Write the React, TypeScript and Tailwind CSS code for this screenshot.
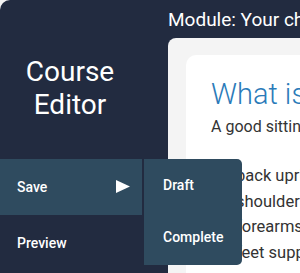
const navy = "bg-[#222b40]";

export default function App() {
  return (
    <div className="relative h-[273px] w-[300px] overflow-hidden bg-[#f4f4f4] font-['Roboto',sans-serif]">
      <div className={`flex h-full ${navy} rounded-tl-[10px]`}>
        <aside className="w-[140px] shrink-0 pt-[55px] text-center text-[28px] leading-[33px] text-white">
          Course
          <br />
          Editor
        </aside>
        <main className="flex min-w-0 flex-1 flex-col pl-[28px] pt-[10px]">
          <h1 className="whitespace-nowrap text-[19px] leading-[20px] text-white">Module: Your chapter</h1>
          <div className="mt-[8px] flex-1 rounded-tl-[8px] bg-[#f4f4f4] pl-[18px] pt-[17px]">
            <div className="h-full rounded-tl-[10px] bg-white pl-[25px] pt-[22px] text-[#333]">
              <h2 className="whitespace-nowrap text-[29px] font-light leading-[34px] text-[#2b7bb9]">What is a good posture?</h2>
              <p className="mt-[7px] whitespace-nowrap text-[16px] leading-[18px]">A good sitting posture means:</p>
              <ul className="mt-[27px] list-disc whitespace-nowrap pl-[25px] text-[16.5px] leading-[25.5px]">
                <li>back upright</li>
                <li>shoulders relaxed</li>
                <li>forearms level</li>
                <li>feet supported</li>
              </ul>
            </div>
          </div>
        </main>
      </div>

      <div className="absolute left-0 top-[159px] w-[142px] text-[14px] font-medium text-white">
        <div className="flex h-[56px] items-center justify-between bg-[#2f4b5f] pl-[17px] pr-[12px]">
          <span>Save</span>
          <svg width="14" height="13" viewBox="0 0 14 13" className="mb-[1px]">
            <polygon points="0,0 14,6.5 0,13" fill="white" />
          </svg>
        </div>
        <div className={`flex h-[56px] items-center ${navy} pl-[17px]`}>Preview</div>
      </div>

      <div className="absolute left-[144px] top-[159px] flex h-[106px] w-[98px] flex-col rounded-r-[5px] bg-[#2f4b5f] text-[14px] font-medium text-white">
        <div className="flex h-[52px] items-center pl-[19px]">Draft</div>
        <div className="flex h-[52px] items-center pl-[19px]">Complete</div>
      </div>
    </div>
  );
}
